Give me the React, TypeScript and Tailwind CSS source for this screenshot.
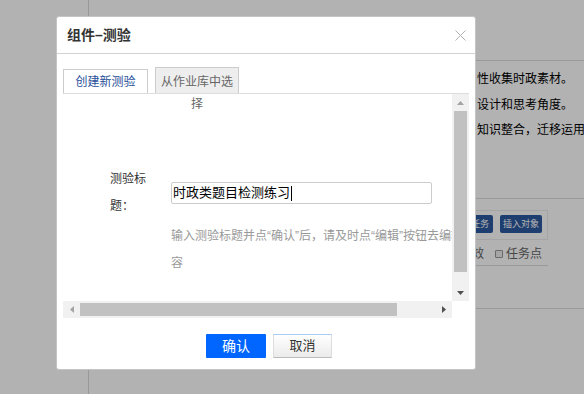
import React from 'react';

type Dir = 'up' | 'down' | 'left' | 'right';

function Arrow({ dir, color }: { dir: Dir; color: string }) {
  const vertical = dir === 'up' || dir === 'down';
  const pts = {
    up: '0,4 3.5,0 7,4',
    down: '0,0 7,0 3.5,4',
    left: '4,0 4,7 0,3.5',
    right: '0,0 0,7 4,3.5',
  }[dir];
  return (
    <svg width={vertical ? 7 : 4} height={vertical ? 4 : 7} viewBox={vertical ? '0 0 7 4' : '0 0 4 7'}>
      <polygon points={pts} fill={color} />
    </svg>
  );
}

function BackgroundPage() {
  return (
    <div className="flex h-full">
      <div className="w-[89px] shrink-0 border-r border-[#dcdcdc]" />
      <div className="flex flex-1 justify-end">
        <div className="w-[108px] shrink-0">
          <div className="h-[61px] border-b border-[#dcdcdc]" />
          <div className="h-[138px] border-b border-[#dcdcdc] pt-[6px] pl-[1px] text-[12px] leading-[25.5px] text-black whitespace-nowrap">
            <p>性收集时政素材。</p>
            <p>设计和思考角度。</p>
            <p>知识整合，迁移运用</p>
          </div>
          <div className="mt-[11px] w-[72px]">
            <div className="flex h-[30px] items-start justify-end gap-[7px] border-y border-r border-[#ececec] pt-[4px] pr-[5px]">
              <span className="h-[18px] shrink-0 rounded-[2px] bg-[#2c5aa0] px-[4px] text-[9px] leading-[18px] text-white whitespace-nowrap">
                添加任务
              </span>
              <span className="h-[18px] w-[42px] shrink-0 rounded-[2px] bg-[#2c5aa0] text-center text-[9px] leading-[18px] text-white whitespace-nowrap">
                插入对象
              </span>
            </div>
            <div className="flex h-[26px] items-center border-b border-[#dcdcdc] pt-[3px] text-[12px] text-[#666] whitespace-nowrap">
              <span className="-ml-[4px]">效</span>
              <span className="ml-[11px] h-[8px] w-[8px] rounded-[1px] border border-[#999] bg-[#eee]" />
              <span className="ml-[3px]">任务点</span>
            </div>
          </div>
          <div className="h-[43px] border-b border-[#dcdcdc]" />
        </div>
      </div>
    </div>
  );
}

function ScrollArea() {
  return (
    <div className="mx-[6px] h-[225px] border-t border-[#ddd]">
      <div className="flex h-[207px]">
        <div className="w-[389px] overflow-hidden pt-[72px] pl-[47px]">
          <div className="flex items-center">
            <div className="w-[44px] shrink-0 text-[12px] leading-[27px] text-[#333]">测验标题：</div>
            <div className="ml-[17px] flex h-[22px] w-[261px] shrink-0 items-center rounded-[2px] border border-[#ccc] pl-[1px] text-[13px] text-black">
              时政类题目检测练习
              <span className="ml-[1px] inline-block h-[15px] w-px bg-black" />
            </div>
          </div>
          <p className="mt-[3px] ml-[61px] w-[310px] text-[12px] leading-[27px] text-[#999]">
            输入测验标题并点“确认”后，请及时点“编辑”按钮去编辑内容
          </p>
        </div>
        <div className="flex w-[17px] flex-col bg-[#f1f1f1]">
          <div className="flex h-[17px] items-center justify-center">
            <Arrow dir="up" color="#a3a3a3" />
          </div>
          <div className="flex-1 px-[2px]">
            <div className="h-[161px] bg-[#c1c1c1]" />
          </div>
          <div className="flex h-[17px] items-center justify-center">
            <Arrow dir="down" color="#505050" />
          </div>
        </div>
      </div>
      <div className="flex h-[17px]">
        <div className="flex w-[389px] bg-[#f1f1f1]">
          <div className="flex w-[17px] items-center justify-center">
            <Arrow dir="left" color="#a3a3a3" />
          </div>
          <div className="flex-1 py-[2px]">
            <div className="h-full w-[317px] bg-[#c1c1c1]" />
          </div>
          <div className="flex w-[17px] items-center justify-center">
            <Arrow dir="right" color="#505050" />
          </div>
        </div>
      </div>
    </div>
  );
}

export default function App() {
  return (
    <div className="relative h-[394px] w-[584px] overflow-hidden bg-white font-['Liberation_Sans','Noto_Sans_CJK_SC',sans-serif]">
      <BackgroundPage />
      <div className="absolute inset-0 bg-black/30" />

      <div className="absolute left-[56px] top-[16px] h-[354px] w-[420px] rounded-[3px] border border-[#c4c4c4] bg-white">
        <div className="flex h-[37px] items-center justify-between border-b border-[#d2d2d2] pl-[10px] pr-[9px]">
          <span className="text-[14px] font-bold text-[#333]">组件–测验</span>
          <svg width="11" height="11" viewBox="0 0 11 11">
            <path d="M0.5 0.5 L10.5 10.5 M10.5 0.5 L0.5 10.5" stroke="#b0b0b0" strokeWidth="1" fill="none" />
          </svg>
        </div>

        <div className="flex h-[39px] items-end px-[6px]">
          <div className="h-[24px] w-[85px] border border-b-0 border-[#ccc] pt-[1px] text-center text-[12px] leading-[22px] text-[#1f4e99]">
            创建新测验
          </div>
          <div className="ml-[7px] h-[26px] w-[84px] border border-b-0 border-[#ccc] bg-[#eee] pt-[3px] text-center text-[12px] leading-[22px] text-[#666]">
            从作业库中选择
          </div>
        </div>

        <ScrollArea />

        <div className="mt-[16px] flex justify-center gap-[7px] pl-[6px]">
          <button className="h-[24px] w-[60px] rounded-[1px] bg-[#0066ff] text-[14px] leading-[24px] text-white">确认</button>
          <button className="h-[24px] w-[59px] border border-x-[#ddd] border-t-[#a8cdf5] border-b-[#bbb] bg-linear-to-b from-white to-[#ebebeb] text-[13px] text-[#333]">
            取消
          </button>
        </div>
      </div>
    </div>
  );
}
